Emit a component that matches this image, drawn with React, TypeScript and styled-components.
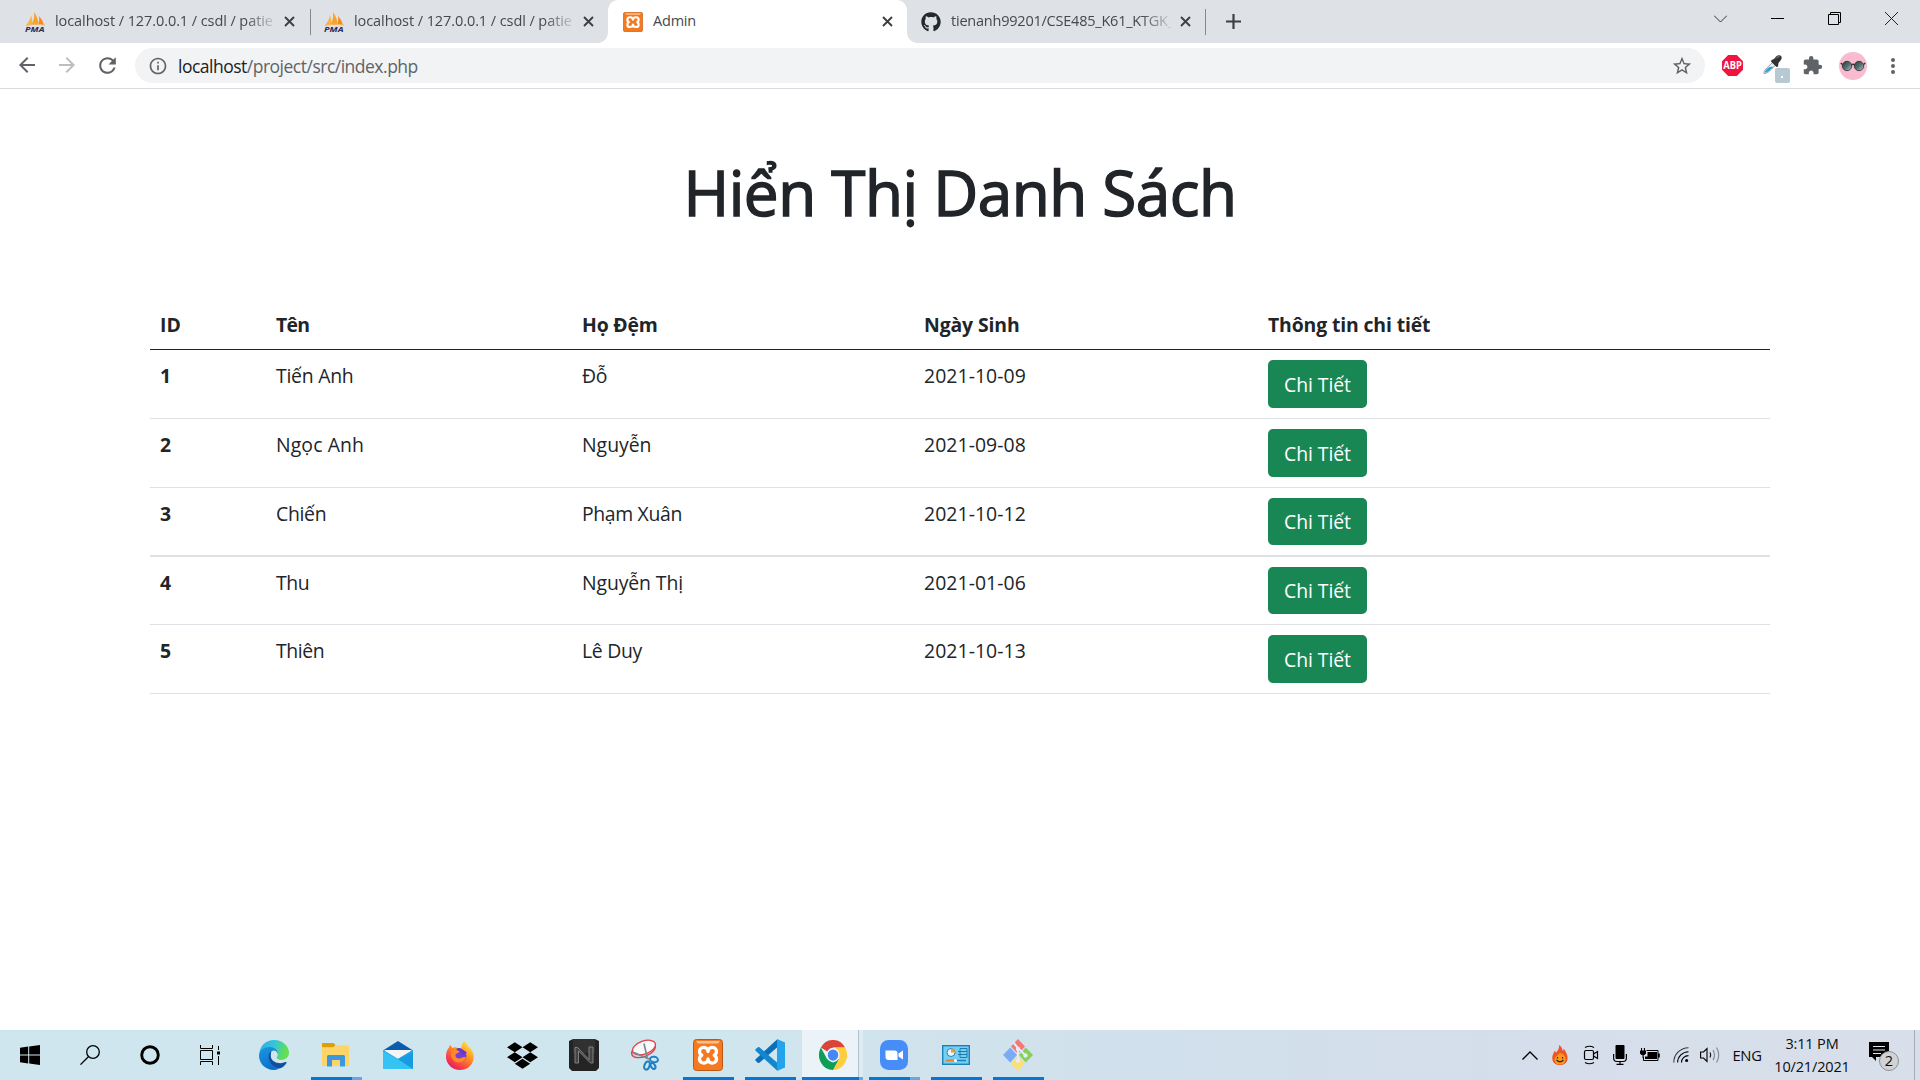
import React from 'react';
import styled, { createGlobalStyle, css } from 'styled-components';
import { FaGithub, FaDropbox } from 'react-icons/fa';
import { MdStarBorder, MdExtension, MdArrowBack, MdArrowForward, MdRefresh, MdInfoOutline } from 'react-icons/md';

const Global = createGlobalStyle`
  * { box-sizing: border-box; }
  html, body { margin: 0; padding: 0; background: #fff; overflow: hidden; }
  body { font-family: "Open Sans", "Noto Sans", sans-serif; color: #212529; }
  svg { display: block; flex: none; }
`;

const Screen = styled.div`
  width: 1920px;
  height: 1080px;
  display: grid;
  grid-template-rows: 43px 46px 941px 50px;
  overflow: hidden;
`;

/* ---------- tab strip ---------- */
const TabStrip = styled.header`
  display: flex;
  background: #dee1e6;
`;
const Tab = styled.div<{ $active?: boolean; $width: number; $pad: number }>`
  display: flex;
  align-items: center;
  width: ${p => p.$width}px;
  padding-left: ${p => p.$pad}px;
  flex: none;
  position: relative;
  ${p => p.$active && css`
    background: #fff;
    border-radius: 10px 10px 0 0;
    &::before, &::after {
      content: '';
      position: absolute;
      bottom: 0;
      width: 10px;
      height: 10px;
    }
    &::before { left: -10px; background: radial-gradient(circle at 0 0, transparent 9.5px, #fff 10px); }
    &::after { right: -10px; background: radial-gradient(circle at 100% 0, transparent 9.5px, #fff 10px); }
  `}
`;
const TabTitle = styled.span<{ $fade?: boolean; $spacing: number }>`
  width: 220px;
  margin: 0 9px 2px 10px;
  font-size: 14.5px;
  line-height: 20px;
  letter-spacing: ${p => p.$spacing}px;
  color: #45494d;
  white-space: nowrap;
  overflow: hidden;
  ${p => p.$fade && css`mask-image: linear-gradient(90deg, #000 190px, transparent 224px);`}
`;
const Separator = styled.i<{ $left: number }>`
  width: 1px;
  height: 26px;
  margin: 9px 0 0 ${p => p.$left}px;
  background: #85888c;
  flex: none;
`;
const NewTab = styled.div`
  display: flex;
  align-items: center;
  margin-left: 20px;
`;
const WindowButtons = styled.div`
  display: flex;
  margin-left: auto;
  padding: 12px 22px 0 0;
  gap: 44px;
`;

/* ---------- toolbar ---------- */
const Toolbar = styled.nav`
  display: flex;
  align-items: center;
  background: #fff;
  border-bottom: 1px solid #dadce0;
  padding-left: 15px;
`;
const NavButtons = styled.div`
  display: flex;
  gap: 16px;
  width: 120px;
  color: #5f6368;
  svg:nth-child(2) { color: #bcbec1; }
`;
const Omnibox = styled.div`
  display: flex;
  align-items: center;
  width: 1570px;
  height: 35px;
  border-radius: 18px;
  background: #f1f3f4;
  padding: 0 12px 0 13px;
  color: #5f6368;
`;
const Url = styled.span`
  flex: 1;
  margin: 1px 0 0 10px;
  font-size: 17.5px;
  letter-spacing: -0.5px;
  line-height: 24px;
  b { font-weight: 400; color: #202124; }
`;
const Extensions = styled.div`
  display: flex;
  align-items: center;
  padding-left: 17px;
`;
const Picker = styled.div`
  position: relative;
  margin-left: 20px;
  width: 39px;
  height: 34px;
  padding-top: 6px;
`;
const PickerBadge = styled.span`
  position: absolute;
  left: 12px;
  top: 19px;
  width: 15px;
  height: 15px;
  border-radius: 2px;
  background: #b7c9d3;
  &::after {
    content: '';
    position: absolute;
    left: 6px;
    top: 8px;
    width: 2px;
    height: 2px;
    background: #fff;
  }
`;
const Avatar = styled.div`
  margin: 0 24px 0 16px;
`;

/* ---------- page ---------- */
const Page = styled.main`
  background: #fff;
  padding: 0 150px;
`;
const Heading = styled.h1`
  margin: 0;
  padding-top: 63px;
  height: 211px;
  font-size: 62px;
  line-height: 80px;
  font-weight: 400;
  letter-spacing: -0.5px;
  -webkit-text-stroke: 1.5px #212529;
  text-align: center;
`;
const columns = '116px 306px 342px 344px 1fr';
const HeadRow = styled.div`
  display: grid;
  grid-template-columns: ${columns};
  height: 50px;
  padding: 10px 0 0 10px;
  border-bottom: 1px solid #212529;
  font-size: 19.4px;
  line-height: 30px;
  font-weight: 700;
  span { white-space: nowrap; }
`;
const Row = styled.div<{ $height: number; $line: number }>`
  display: grid;
  grid-template-columns: ${columns};
  height: ${p => p.$height}px;
  padding: 10px 0 0 10px;
  border-bottom: ${p => p.$line}px solid #dee2e6;
  font-size: 19.4px;
  line-height: 31px;
  b { font-weight: 700; }
`;
const Fit = styled.span<{ $ls: number }>`
  letter-spacing: ${p => p.$ls}px;
  white-space: nowrap;
`;
const Detail = styled.button<{ $height: number }>`
  width: 99px;
  height: ${p => p.$height}px;
  padding: 1px 0 0;
  border: 0;
  border-radius: 5px;
  background: #198754;
  color: #fff;
  font: 400 19.4px/30px "Open Sans", "Noto Sans", sans-serif;
  letter-spacing: -0.08px;
`;

/* ---------- taskbar ---------- */
const Taskbar = styled.footer`
  display: flex;
  background: linear-gradient(90deg, #d0e6ee 0%, #d0e6ee 38%, #d0e0ec 60%, #d5deea 80%, #d8dfeb 100%);
`;
const Item = styled.div<{ $width: number; $bar?: number; $more?: number; $shift?: number }>`
  width: ${p => p.$width}px;
  flex: none;
  display: flex;
  flex-direction: column;
  align-items: center;
  justify-content: center;
  position: relative;
  padding-right: ${p => p.$shift || 0}px;
  ${p => p.$bar && css`
    &::after {
      content: '';
      position: absolute;
      bottom: 0;
      left: calc(50% - ${(p.$bar + (p.$more || 0)) / 2}px);
      width: ${p.$bar + (p.$more || 0)}px;
      height: 3px;
      background: linear-gradient(90deg, #0078d7 ${p.$bar}px, #62aae4 ${p.$bar}px);
    }
  `}
`;
const ActiveItem = styled(Item)`
  margin: 0 3px 0 0;
  background: linear-gradient(90deg, #ebf3f8 56px, #afc3cf 56px, #afc3cf 57px, #dfebf2 57px);
`;
const Tray = styled.div`
  display: flex;
  align-items: center;
  margin-left: auto;
  color: #0b0c0d;
`;
const Cell = styled.div<{ $width: number }>`
  width: ${p => p.$width}px;
  display: flex;
  justify-content: center;
`;
const Lang = styled.span`
  width: 46px;
  text-align: center;
  font-size: 14.8px;
  letter-spacing: -0.3px;
  white-space: nowrap;
`;
const Clock = styled.div`
  width: 84px;
  text-align: center;
  font-size: 14.5px;
  line-height: 23px;
  letter-spacing: -0.15px;
  white-space: nowrap;
`;
const Notice = styled.div`
  position: relative;
  width: 30px;
  height: 30px;
  margin: 4px 15px 0 15px;
`;
const Count = styled.span`
  position: absolute;
  left: 10px;
  top: 9px;
  width: 20px;
  height: 20px;
  border-radius: 50%;
  border: 1px solid #8d9095;
  background: #d0d2d6;
  font-size: 14.5px;
  line-height: 18px;
  text-align: center;
`;
const Edge = styled.i`
  width: 1px;
  height: 50px;
  background: #a6adb8;
  margin-right: 5px;
`;

/* ---------- drawings ---------- */
const PmaIcon = () => (
  <svg width="20" height="20" viewBox="0 0 20 20">
    <path d="M1 13 Q5 9 6 3 Q8 8 7 13Z" fill="#f9b24a" />
    <path d="M6 13 Q10 8 9 0 Q14 7 13 13Z" fill="#f7a12b" />
    <path d="M13 13 Q15 8 14 4 Q18 8 19 13Z" fill="#f58c1a" />
    <path d="M1 13.500 Q10 11 20 13" stroke="#f6b96b" fill="none" />
    <text x="0" y="19.500" fontSize="7.800" fontWeight="700" fontStyle="italic" fill="#2d2a55" textLength="19.500" lengthAdjust="spacingAndGlyphs" fontFamily="Open Sans, sans-serif">PMA</text>
  </svg>
);
const CloseIcon = ({ size = 11 }: { size?: number }) => (
  <svg width={size} height={size} viewBox="0 0 11 11" stroke="#3c4043" strokeWidth="1.9">
    <path d="M1 1 10 10M10 1 1 10" />
  </svg>
);
const XamppIcon = ({ w, h }: { w: number; h: number }) => (
  <svg width={w} height={h} viewBox="0 0 30 32" preserveAspectRatio="none">
    <rect x=".5" y=".5" width="29" height="31" rx="3" fill="#f47920" stroke="#bb5a14" />
    <path d="M3 2h24l-2 2.500H5z" fill="#fbc08f" />
    <path d="M15 12.500c0-5.200-8-5.500-8.500-.5-.2 2 .9 3.500 2.300 4.300-1.400.8-2.500 2.200-2.300 4.200.5 5 8.500 4.700 8.500-.5 0 5.200 8 5.500 8.500.5.2-2-.9-3.400-2.300-4.200 1.400-.8 2.500-2.300 2.300-4.300-.5-5-8.500-4.700-8.500.5z" fill="none" stroke="#fff" strokeWidth="3.300" strokeLinejoin="round" />
    <path d="M11 16.200h8" stroke="#f47920" strokeWidth="1" />
  </svg>
);
const AbpIcon = () => (
  <svg width="21" height="21" viewBox="0 0 21 21">
    <path d="M6.200 0h8.600L21 6.200v8.600L14.800 21H6.200L0 14.800V6.200z" fill="#ee1540" />
    <text x="1.200" y="14.200" fontSize="10.500" fontWeight="700" fill="#fff" textLength="18.600" lengthAdjust="spacingAndGlyphs" fontFamily="Open Sans, sans-serif">ABP</text>
  </svg>
);
const DropperIcon = () => (
  <svg width="20" height="20" viewBox="0 0 20 20">
    <path d="M1 18.500c0-3.500 1.500-4.300 8.500-11l2.800 2.800c-6 6-7.500 8.200-11.300 8.200z" fill="#e8eef2" stroke="#8b959c" strokeWidth=".9" />
    <path d="M1.800 17.600c.5-2.600 1.800-3.400 4.500-5.600l4.200-.3c-4.500 4.600-6 5.400-8.700 5.900z" fill="#2b9fdd" />
    <path d="M8.500 5 11 4c1.800-2.500 3.500-4 5.300-3.700 2.700.4 3.200 3.200 1 5.400L15.500 8l-.5 3.500-1.500.5L8 6.500z" fill="#333" />
    <path d="M13 3.500c1.300-1.500 2.200-2 3.500-1.800" stroke="#999" fill="none" />
  </svg>
);
const AvatarIcon = () => (
  <svg width="28" height="28" viewBox="0 0 28 28">
    <defs>
      <linearGradient id="lens" x1="0" y1="0" x2="1" y2="1">
        <stop offset="0" stopColor="#243b40" /><stop offset=".55" stopColor="#587479" /><stop offset="1" stopColor="#c2cccd" />
      </linearGradient>
    </defs>
    <circle cx="14" cy="14" r="14" fill="#f8bbd0" />
    <g fill="url(#lens)" stroke="#2d2828" strokeWidth=".8">
      <circle cx="8" cy="14" r="4.700" /><circle cx="20" cy="14" r="4.700" />
    </g>
    <path d="M3.400 12.500 1.800 11M24.600 12.500l1.600-1.500M12.500 13q1.500-1.600 3 0" stroke="#2d2828" strokeWidth="1.200" fill="none" />
  </svg>
);
const WindowsIcon = () => (
  <svg width="20" height="20" viewBox="0 0 20 20"><path d="M0 2.700 8.200 1.600V9.500H0zM9.200 1.400 20 0v9.500H9.200zM0 10.500h8.200v7.900L0 17.300zM9.200 10.500H20V20L9.200 18.600z" /></svg>
);
const SearchIcon = () => (
  <svg width="20" height="20" viewBox="0 0 20 20" fill="none" stroke="#000" strokeWidth="1.300"><circle cx="13" cy="7" r="6.300" /><path d="M8.600 11.500.5 19.600" /></svg>
);
const CortanaIcon = () => (
  <svg width="20" height="20" viewBox="0 0 20 20"><circle cx="10" cy="10" r="8.300" fill="none" stroke="#000" strokeWidth="2.900" /></svg>
);
const TaskViewIcon = () => (
  <svg width="20" height="20" viewBox="0 0 20 20" fill="none" stroke="#000" strokeWidth="1">
    <path d="M.5 0v3.500h12V0M.5 5.500h12v9H.5zM.5 20v-3.500h12V20M18.500 1v4M18.500 11v9" /><path d="M17 6.500h3v3h-3z" fill="#000" stroke="none" />
  </svg>
);
const EdgeIcon = () => (
  <svg width="30" height="30" viewBox="0 0 30 30">
    <defs>
      <linearGradient id="e1" x1="0" y1="0" x2="1" y2=".3"><stop offset="0" stopColor="#2fa9e8" /><stop offset=".5" stopColor="#33c4dd" /><stop offset="1" stopColor="#63e04f" /></linearGradient>
      <linearGradient id="e2" x1="0" y1="0" x2=".5" y2="1"><stop offset="0" stopColor="#1d97e2" /><stop offset="1" stopColor="#0870cc" /></linearGradient>
    </defs>
    <path d="M.3 13C1.500 5 7.500 0 15 0c8.700 0 15 6.200 15 12.500 0 4.700-3.700 7.500-7.500 7.500-3.500 0-5-1.300-4.800-2.400.1-.7 1-1.200 1-3 0-3-2.600-5.600-6.500-5.600C7 9 2 11 .3 13z" fill="url(#e1)" />
    <path d="M0 15C.5 9.800 5.500 7 10.500 7c5 0 8.300 3.200 8.300 7-.5-2-2-3.600-4-3.600-3 0-4.500 4-4.500 7.600 0 6 5 10 10 10.500C18 29.700 16 30 14.500 30 6.500 30-.3 23.500 0 15z" fill="url(#e2)" />
    <path d="M12.200 11.600C9.500 13 9.500 16 9.800 18.500c.6 5 4.700 9.600 10.700 10 3-1 5.500-3 7-5.600.4-.8-.2-1.200-.9-.8-6 2.700-13.800.3-14.700-5.100-.2-2 .1-4 .3-5.400z" fill="#0f4f9e" />
  </svg>
);
const ExplorerIcon = () => (
  <svg width="28" height="24" viewBox="0 0 28 24">
    <path d="M0 0h11.500L13.500 2 12 4.500H0z" fill="#dda009" />
    <path d="M0 4.500h11L13.500 2.500H27V23H0z" fill="#fcd467" />
    <path d="M5 23.500V13.500q0-1.500 1.500-1.500h15q1.500 0 1.500 1.500v10h-5V17H10v6.500z" fill="#3b97de" />
  </svg>
);
const MailIcon = () => (
  <svg width="30" height="28" viewBox="0 0 30 28">
    <path d="M0 9.500 15 0l15 9.500z" fill="#0a5cac" /><path d="M2 9h26v10H2z" fill="#f3f4f5" />
    <path d="M0 9v19h30V9L15 18z" fill="#2cb4ee" /><path d="M0 28V9l30 19z" fill="#34c3f2" /><path d="M30 28V9L15 18z" fill="#199be2" /><path d="M0 9l3 1.700L15 18 30 9v2L15 18.500 0 10z" fill="#2aa9ea" />
  </svg>
);
const FirefoxIcon = () => (
  <svg width="28" height="29" viewBox="0 0 28 29">
    <defs><linearGradient id="f1" x1=".9" y1="0" x2=".2" y2="1"><stop offset="0" stopColor="#fff44f" /><stop offset=".4" stopColor="#ff9a22" /><stop offset=".75" stopColor="#fb4145" /><stop offset="1" stopColor="#e01567" /></linearGradient></defs>
    <path d="M18 0c2 1.500 3 3.300 4 5 5 4 6.500 9 5.500 13.500C26 25 20.500 29 14 29 6 29 0 23 0 15.500 0 11 1.500 8 3 6.500L4 3.800 6.500 7c1-.6 2.500-.8 4-.5L15 8c.5-3 1-5.500 3-8z" fill="url(#f1)" />
    <circle cx="14.500" cy="14.800" r="6" fill="#7540d5" />
    <path d="M5 9c3-.5 5.500 1 9 1-1 2.300-3.500 2-4.500 3.500-.5 2.200 1 4 3.500 4 3 0 4-2.500 7-1-1.500 3.500-4 5-7 5-4.500 0-7.500-3.500-8-7.500z" fill="#ff8a2a" />
    <path d="M10 8c2-1.500 5-1 6.500.5l4.500 3-3.500 2.500c-1-2.500-4-3-7.500-6z" fill="#6d35c9" />
  </svg>
);
const NIcon = () => (
  <svg width="30" height="32" viewBox="0 0 30 32">
    <path d="M4 0h22l4 2v27l-3 3H3l-3-3V2z" fill="#242424" /><path d="M4 0h22v14H4z" fill="#313131" />
    <path d="M6 24V8.500h2.500L20 20.500V8h4v16h-2.500L9.500 12v12z" fill="#444" stroke="#8a8a8a" strokeWidth=".9" />
  </svg>
);
const SnipIcon = () => (
  <svg width="30" height="32" viewBox="0 0 30 32" fill="none">
    <ellipse cx="13.500" cy="11" rx="12.500" ry="6.500" transform="rotate(-22 13.500 11)" fill="#c9d2da" stroke="#d64753" strokeWidth="1.400" />
    <ellipse cx="14" cy="8.500" rx="12" ry="6.500" transform="rotate(-20 14 8.500)" fill="#f7f9fb" stroke="#e5414b" strokeWidth="1.300" />
    <path d="M14 4.500 17.500 20M4 13.500 19 20" stroke="#7b8791" strokeWidth="1.600" />
    <g stroke="#1d80c6" strokeWidth="2"><ellipse cx="24" cy="20.500" rx="4" ry="2.700" transform="rotate(10 24 20.500)" /><ellipse cx="17" cy="26.500" rx="2.500" ry="4.200" transform="rotate(20 17 26.500)" /><ellipse cx="23" cy="27" rx="2" ry="3.200" transform="rotate(-35 23 27)" /></g>
  </svg>
);
const VsIcon = () => (
  <svg width="30" height="32" viewBox="0 0 30 32">
    <path d="M22 0 30 3.500v25L22 32z" fill="#23a3ec" />
    <path d="M22 8.500v-8L.8 20q-1 1 0 2l2 1.800q.8.500 1.600 0z" fill="#0a6fb8" />
    <path d="M22 23.500v8L.8 12q-1-1 0-2l2-1.800q.8-.5 1.600 0z" fill="#1087cf" />
  </svg>
);
const ChromeIcon = () => (
  <svg width="28" height="30" viewBox="0 0 48 48" preserveAspectRatio="none">
    <path d="M24 24 3.200 12A24 24 0 0 1 44.800 12H24z" fill="#dc4437" />
    <path d="M44.800 12A24 24 0 0 1 24 48L34.400 30 24 12z" fill="#ffcd40" />
    <path d="M24 48A24 24 0 0 1 3.200 12L13.600 30 24 36l10.400-6z" fill="#109d58" />
    <circle cx="24" cy="24" r="11.500" fill="#f4f5f6" /><circle cx="24" cy="24" r="9" fill="#4587f4" />
  </svg>
);
const ZoomIcon = () => (
  <svg width="28" height="30" viewBox="0 0 28 30"><rect width="28" height="30" rx="8.500" fill="#468df8" /><path d="M5.500 10.500h9q3 0 3 3V20h-9q-3 0-3-3zM18.500 13.500 23 10.500v9l-4.500-3z" fill="#fff" /></svg>
);
const PanelIcon = () => (
  <svg width="28" height="20" viewBox="0 0 28 20">
    <rect x=".7" y=".7" width="26.600" height="18.600" fill="#74cff4" stroke="#1c81b8" strokeWidth="1.400" />
    <circle cx="9" cy="7.500" r="4" fill="#e9f7fd" stroke="#2880b5" /><path d="M9 7.500V3.500a4 4 0 0 1 4 4z" fill="#f29c2f" />
    <path d="M18 3.500h7v9h-7zM16 6.500h9M16 9.500h9" stroke="#237aa9" fill="none" /><path d="M4 15.500h9" stroke="#f08317" strokeWidth="2" /><path d="M14 15.500h10" stroke="#1c81b8" strokeWidth="1.500" /><circle cx="13.500" cy="15.500" r="1.500" fill="#fff" />
  </svg>
);
const GitIcon = () => (
  <svg width="30" height="32" viewBox="0 0 30 32">
    <path d="M15 0 22 7.500 15 15 8 7.500z" fill="#f3787a" /><path d="M7.200 8.500 14 16 7.200 23.500 0 16z" fill="#7cabf5" />
    <path d="M22.800 8.500 30 16l-7.200 7.500L16 16z" fill="#87cf5b" /><path d="M15 17l7 7.500-7 7.500-7-7.500z" fill="#fbe07a" />
    <path d="M10 3 15 9v13M15 9l8 8" stroke="#e4edf4" strokeWidth="2" fill="none" /><g fill="#e4edf4"><circle cx="15" cy="10" r="2.200" /><circle cx="15" cy="21.500" r="2.200" /><circle cx="22.500" cy="16.500" r="2.200" /></g>
  </svg>
);
const FireIcon = () => (
  <svg width="16" height="20" viewBox="0 0 16 20"><path d="M7 0c3 2 3.500 4 3.500 6L12 4c2 3 4 6 3.500 10-.7 4-3.500 6-7.500 6s-7-2-7.700-6C0 10.500 1.500 8 3 5.500l1 2.200C6 5.500 7.500 3.500 7 0z" fill="#ef5326" /><path d="M8 8c4 1 6 4 5.500 7-.6 3-2.500 4.500-5.500 4.500S3 18 2.500 15C2.500 12 5 11 8 8z" fill="#fa9a20" /><path d="M5.500 12v1.500M10.500 12v1.500M4.500 15q3.500 3.500 7 0" stroke="#41240b" strokeWidth="1.200" fill="none" /></svg>
);
const MeetIcon = () => (
  <svg width="16" height="20" viewBox="0 0 16 20" fill="none" stroke="#000" strokeWidth="1.200"><rect x="1.500" y="5.500" width="9" height="9" rx="1.500" /><path d="M10.500 9 14.500 6.500v7L10.500 11M2 2.500q4.500-2.500 9 0M2 17.500q4.500 2.500 9 0" /></svg>
);
const MicIcon = () => (
  <svg width="14" height="20" viewBox="0 0 14 20"><rect x="2.500" width="9" height="14" rx="1" /><path d="M.6 9v4q0 3.500 3.400 3.500h6q3.400 0 3.400-3.500V9M7 16.500v3M3.500 19.400h7" fill="none" stroke="#000" strokeWidth="1.200" /></svg>
);
const BatteryIcon = () => (
  <svg width="20" height="14" viewBox="0 0 20 14">
    <path d="M6.500 2.500H18v10H3.500V9" fill="none" stroke="#000" />
    <path d="M7.500 4H17v7H5V8.500h2.500zM18 5.500h1.800v4H18z" />
    <path d="M0 2.500h6v3L4.500 7h-3L0 5.500zM1 0h1.100v3H1zM3.900 0H5v3H3.900zM2.500 7h1.200v3H2.500z" />
  </svg>
);
const WifiIcon = () => (
  <svg width="16" height="16" viewBox="0 0 16 16" fill="none" stroke="#000" strokeWidth="1.100"><path d="M.8 15.500C.8 7.500 7 1 15.500.8" opacity=".75" /><path d="M4.600 15.500C4.600 9.500 9.500 4.800 15.500 4.700M8.500 15.500c0-4 3-6.800 7-6.900" /><circle cx="13.600" cy="13.600" r="1.500" fill="#000" stroke="none" /></svg>
);
const SpeakerIcon = () => (
  <svg width="20" height="18" viewBox="0 0 20 18" fill="none" stroke="#000" strokeWidth="1.100"><path d="M.6 6h2.900L7 2.500v13L3.500 12H.6z" /><path d="M10 6.500q1.500 2.500 0 5" /><path d="M13 4q3 5 0 10M16.500 1.500q4.500 7.500 0 15" opacity=".4" /></svg>
);

const people = [
  { id: 1, ten: 'Tiến Anh', tenLs: -0.25, ho: 'Đỗ', hoLs: -0.3, date: '2021-10-09', height: 69, line: 1, button: 48 },
  { id: 2, ten: 'Ngọc Anh', tenLs: 0.12, ho: 'Nguyễn', hoLs: 0, date: '2021-09-08', height: 69, line: 1, button: 48 },
  { id: 3, ten: 'Chiến', tenLs: -0.3, ho: 'Phạm Xuân', hoLs: -0.35, date: '2021-10-12', height: 69, line: 2, button: 47 },
  { id: 4, ten: 'Thu', tenLs: -0.4, ho: 'Nguyễn Thị', hoLs: -0.1, date: '2021-01-06', height: 68, line: 1, button: 47 },
  { id: 5, ten: 'Thiên', tenLs: -0.4, ho: 'Lê Duy', hoLs: -0.3, date: '2021-10-13', height: 69, line: 1, button: 48 },
];

export default function App() {
  return (
    <Screen>
      <Global />
      <TabStrip>
        <Tab $width={310} $pad={25}>
          <PmaIcon /><TabTitle $fade $spacing={-0.08}>localhost / 127.0.0.1 / csdl / patie</TabTitle><CloseIcon />
        </Tab>
        <Separator $left={0} />
        <Tab $width={297} $pad={13}>
          <PmaIcon /><TabTitle $fade $spacing={-0.08}>localhost / 127.0.0.1 / csdl / patie</TabTitle><CloseIcon />
        </Tab>
        <Tab $active $width={299} $pad={15}>
          <XamppIcon w={20} h={20} /><TabTitle $spacing={-0.2}>Admin</TabTitle><CloseIcon />
        </Tab>
        <Tab $width={298} $pad={14}>
          <FaGithub size={20} color="#24292e" /><TabTitle $fade $spacing={-0.22}>tienanh99201/CSE485_K61_KTGK_</TabTitle><CloseIcon />
        </Tab>
        <Separator $left={0} />
        <NewTab><svg width="15" height="15" viewBox="0 0 15 15" stroke="#3c4043" strokeWidth="2.200"><path d="M7.500 0v15M0 7.500h15" /></svg></NewTab>
        <WindowButtons>
          <svg width="13" height="13" viewBox="0 0 13 13" fill="none" stroke="#333"><path d="M0 3.500 6.500 10 13 3.500" /></svg>
          <svg width="13" height="13" viewBox="0 0 13 13" stroke="#000"><path d="M0 6.500h13" /></svg>
          <svg width="13" height="13" viewBox="0 0 13 13" fill="none" stroke="#000"><path d="M.5 2.500h10v10H.5zM2.500 2.500v-2h10v10h-2" /></svg>
          <svg width="13" height="13" viewBox="0 0 13 13" stroke="#222"><path d="M0 0 13 13M13 0 0 13" /></svg>
        </WindowButtons>
      </TabStrip>

      <Toolbar>
        <NavButtons><MdArrowBack size={24} /><MdArrowForward size={24} /><MdRefresh size={25} /></NavButtons>
        <Omnibox>
          <MdInfoOutline size={20} />
          <Url><b>localhost</b>/project/src/index.php</Url>
          <MdStarBorder size={22} />
        </Omnibox>
        <Extensions>
          <AbpIcon />
          <Picker><DropperIcon /><PickerBadge /></Picker>
          <MdExtension size={21} color="#5f6368" />
          <Avatar><AvatarIcon /></Avatar>
          <svg width="4" height="16" viewBox="0 0 4 16" fill="#5f6368"><circle cx="2" cy="2" r="2" /><circle cx="2" cy="8" r="2" /><circle cx="2" cy="14" r="2" /></svg>
        </Extensions>
      </Toolbar>

      <Page>
        <Heading>Hiển Thị Danh Sách</Heading>
        <HeadRow>
          <Fit $ls={0}>ID</Fit><Fit $ls={-0.7}>Tên</Fit><Fit $ls={-0.2}>Họ Đệm</Fit><Fit $ls={-0.12}>Ngày Sinh</Fit><Fit $ls={-0.13}>Thông tin chi tiết</Fit>
        </HeadRow>
        {people.map(p => (
          <Row key={p.id} $height={p.height} $line={p.line}>
            <b>{p.id}</b>
            <Fit $ls={p.tenLs}>{p.ten}</Fit>
            <Fit $ls={p.hoLs}>{p.ho}</Fit>
            <Fit $ls={0.07}>{p.date}</Fit>
            <Detail $height={p.button}>Chi Tiết</Detail>
          </Row>
        ))}
      </Page>

      <Taskbar>
        <Item $width={60}><WindowsIcon /></Item>
        <Item $width={60}><SearchIcon /></Item>
        <Item $width={60}><CortanaIcon /></Item>
        <Item $width={60}><TaskViewIcon /></Item>
        <Item $width={68}><EdgeIcon /></Item>
        <Item $width={57} $bar={41} $more={10} $shift={2}><ExplorerIcon /></Item>
        <Item $width={66}><MailIcon /></Item>
        <Item $width={58}><FirefoxIcon /></Item>
        <Item $width={66}><FaDropbox size={31} color="#000" /></Item>
        <Item $width={58}><NIcon /></Item>
        <Item $width={66} $shift={2}><SnipIcon /></Item>
        <Item $width={59} $bar={51} $shift={2}><XamppIcon w={30} h={32} /></Item>
        <Item $width={64} $bar={51}><VsIcon /></Item>
        <ActiveItem $width={61} $bar={57} $more={4}><ChromeIcon /></ActiveItem>
        <Item $width={57} $bar={41} $more={10} $shift={2}><ZoomIcon /></Item>
        <Item $width={67} $bar={51} $shift={2}><PanelIcon /></Item>
        <Item $width={57} $bar={51} $shift={2}><GitIcon /></Item>
        <Tray>
          <Cell $width={30}><svg width="16" height="9" viewBox="0 0 16 9" fill="none" stroke="#000" strokeWidth="1.300"><path d="M.5 8.500 8 1l7.500 7.500" /></svg></Cell>
          <Cell $width={30}><FireIcon /></Cell>
          <Cell $width={31}><MeetIcon /></Cell>
          <Cell $width={27}><MicIcon /></Cell>
          <Cell $width={33}><BatteryIcon /></Cell>
          <Cell $width={29}><WifiIcon /></Cell>
          <Cell $width={29}><SpeakerIcon /></Cell>
          <Lang>ENG</Lang>
          <Clock>3:11 PM<br />10/21/2021</Clock>
          <Notice>
            <svg width="20" height="20" viewBox="0 0 20 20"><path d="M0 0h20v15H7v4l-4-4H0z" /><path d="M4 4.500h12M4 8h12M4 11.500h8" stroke="#dfe5ee" strokeWidth="1.200" /></svg>
            <Count>2</Count>
          </Notice>
          <Edge />
        </Tray>
      </Taskbar>
    </Screen>
  );
}
